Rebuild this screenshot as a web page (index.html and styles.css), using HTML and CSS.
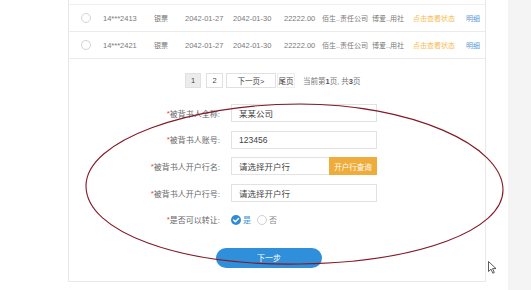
FILE: index.html
```html
<!DOCTYPE html>
<html lang="zh-CN">
<head>
<meta charset="utf-8">
<title>被背书人信息</title>
<link rel="stylesheet" href="styles.css">
</head>
<body>
<div class="page">
  <div class="gutter"></div>
  <main class="card">
    <div class="list">
      <div class="row">
        <span class="radio"></span>
        <span>14***2413</span>
        <span class="cjk">银票</span>
        <span>2042-01-27</span>
        <span>2042-01-30</span>
        <span>22222.00</span>
        <span class="cjk">佰生..责任公司</span>
        <span class="cjk">博爱..用社</span>
        <span class="cjk status">点击查看状态</span>
        <span class="cjk detail">明细</span>
      </div>
      <div class="row">
        <span class="radio"></span>
        <span>14***2421</span>
        <span class="cjk">银票</span>
        <span>2042-01-27</span>
        <span>2042-01-30</span>
        <span>22222.00</span>
        <span class="cjk">佰生..责任公司</span>
        <span class="cjk">博爱..用社</span>
        <span class="cjk status">点击查看状态</span>
        <span class="cjk detail">明细</span>
      </div>
    </div>

    <div class="pager">
      <span class="pg pg-cur">1</span>
      <span class="pg pg-2">2</span>
      <span class="pg pg-next">下一页&gt;</span>
      <span class="pg pg-last">尾页</span>
      <span class="pg-info">当前第<b>1</b>页, 共<b>3</b>页</span>
    </div>

    <form class="form">
      <label class="label"><em>*</em>被背书人全称:</label>
      <div class="input">某某公司</div>

      <label class="label"><em>*</em>被背书人账号:</label>
      <div class="input">123456</div>

      <label class="label"><em>*</em>被背书人开户行名:</label>
      <div class="input input-btn"><span>请选择开户行</span><span class="query">开户行查询</span></div>

      <label class="label"><em>*</em>被背书人开户行号:</label>
      <div class="input">请选择开户行</div>

      <label class="label"><em>*</em>是否可以转让:</label>
      <div class="choices">
        <span class="choice on"><span class="dot"><svg viewBox="0 0 10 10" width="10" height="10"><path d="M2.6 5.1 L4.4 6.8 L7.5 3.5" fill="none" stroke="#fff" stroke-width="1.4" stroke-linecap="round" stroke-linejoin="round"/></svg></span>是</span>
        <span class="choice"><span class="dot"></span>否</span>
      </div>
    </form>

    <button class="next" type="button">下一步</button>
  </main>
  <div class="spacer"></div>
  <aside class="side"></aside>
</div>

<svg class="annotation" viewBox="0 0 531 290" width="531" height="290">
  <path d="M86 186 C86 140 190 104 300 104 C410 104 503 145 503 190 C503 230 420 262 300 264 C180 266 86 232 86 186 Z" fill="none" stroke="#821a26" stroke-width="1.1"/>
</svg>
<svg class="cursor" viewBox="0 0 9 13" width="9" height="13">
  <path d="M0.5 0.5 L0.5 10.5 L3 8.2 L4.8 12.2 L6.3 11.5 L4.6 7.6 L8 7.6 Z" fill="#fff" stroke="#333" stroke-width="0.8" stroke-linejoin="round"/>
</svg>
</body>
</html>
```

FILE: styles.css
```css
* { box-sizing: border-box; }

html, body {
  margin: 0;
  padding: 0;
  background: #fff;
}

body {
  position: relative;
  width: 531px;
  height: 290px;
  overflow: hidden;
  font-family: "Liberation Sans", "Noto Sans CJK SC", sans-serif;
  color: #666;
}

.page {
  display: flex;
  height: 290px;
}

.gutter { width: 68px; flex: none; }
.spacer { width: 22px; flex: none; }
.side { flex: 1; background: #f4f4f4; }

.card {
  width: 418px;
  height: 282px;
  flex: none;
  border: 1px solid #e8e8e8;
  border-top: none;
  display: flex;
  flex-direction: column;
}

/* table rows */
.list {
  margin-top: 4px;
  border-top: 1px solid #efefef;
}

.row {
  display: grid;
  grid-template-columns: 22px 51px 31px 48px 51px 38px 50px 41px 53px 1fr;
  align-items: center;
  height: 27px;
  padding-left: 12px;
  border-bottom: 1px solid #ececec;
  font-size: 7.5px;
  color: #7a7a7a;
  white-space: nowrap;
}

.row .cjk { font-size: 7px; }

.radio {
  width: 10px;
  height: 10px;
  border: 1px solid #d4d4d4;
  border-radius: 50%;
}

.status { color: #f6bb4e; }
.detail { color: #5b9bd8; }

/* pager */
.pager {
  display: flex;
  align-items: center;
  margin-top: 14px;
  padding-left: 116px;
  font-size: 7.5px;
}

.pg {
  height: 15px;
  border: 1px solid #e0e0e0;
  display: flex;
  align-items: center;
  justify-content: center;
  color: #444;
}

.pg-cur { width: 16px; background: #ececec; margin-right: 5px; }
.pg-2 { width: 17px; margin-right: 3px; }
.pg-next { width: 50px; }
.pg-last { width: 18px; margin-left: 1px; border-color: #eee; }

.pg-info {
  margin-left: 8px;
  color: #777;
}
.pg-info b { font-weight: bold; color: #555; }

/* form */
.form {
  display: grid;
  grid-template-columns: 151px 146px;
  grid-auto-rows: 18px;
  column-gap: 11px;
  row-gap: 8.7px;
  margin: 16px 0 0 0;
}

.label {
  display: flex;
  align-items: center;
  justify-content: flex-end;
  font-size: 8px;
  color: #666;
  white-space: nowrap;
}
.label em { font-style: normal; color: #e04848; }

.input {
  display: flex;
  align-items: center;
  border: 1px solid #e2e2e2;
  padding-left: 7px;
  font-size: 8.5px;
  color: #444;
  background: #fff;
}

.query {
  margin: -1px -1px -1px auto;
  align-self: stretch;
  width: 48px;
  display: flex;
  align-items: center;
  justify-content: center;
  background: #f0ac3a;
  color: #fff;
  font-size: 7.5px;
}

.choices {
  display: flex;
  align-items: center;
  gap: 6px;
  font-size: 8px;
}

.choice {
  display: flex;
  align-items: center;
  gap: 2px;
  color: #888;
}
.choice.on { color: #3a8fd6; }

.dot {
  width: 10px;
  height: 10px;
  border-radius: 50%;
  border: 1px solid #cfcfcf;
  display: flex;
}
.choice.on .dot {
  border: none;
  background: #2f8bd6;
}

.next {
  align-self: flex-start;
  margin: 19px 0 0 147px;
  width: 106px;
  height: 20px;
  border: none;
  border-radius: 10px;
  background: #2f8fdb;
  color: #fff;
  font-family: "Liberation Sans", "Noto Sans CJK SC", sans-serif;
  font-size: 8px;
  padding: 0;
}

/* annotation overlays */
.annotation {
  position: absolute;
  left: 0;
  top: 0;
  pointer-events: none;
}

.cursor {
  position: absolute;
  left: 488px;
  top: 261px;
  pointer-events: none;
}
```
